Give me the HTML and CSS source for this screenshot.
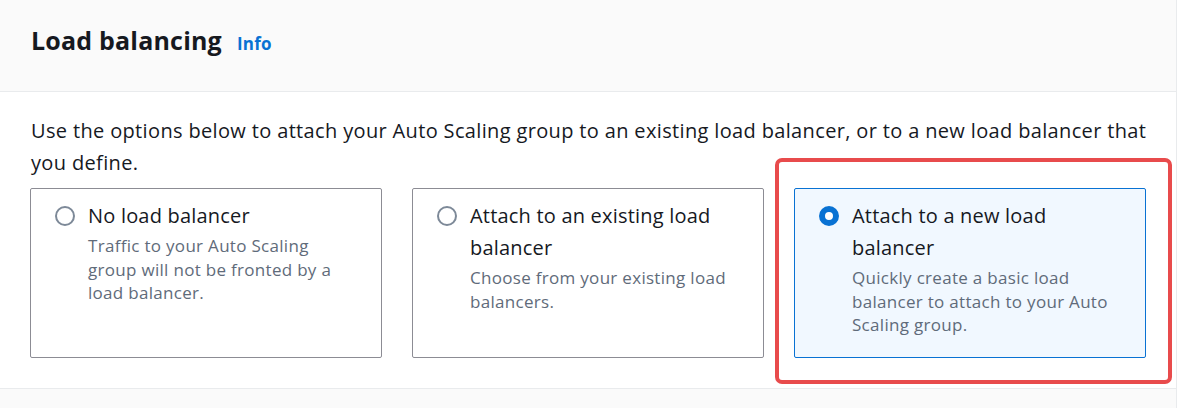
FILE: index.html
```html
<!DOCTYPE html>
<html lang="en">
<head>
<meta charset="utf-8">
<title>Load balancing</title>
<link rel="stylesheet" href="styles.css">
</head>
<body>
<div class="panel">
  <div class="panel-header">
    <h2 class="title">Load balancing</h2>
    <a class="info" href="#">Info</a>
  </div>
  <div class="panel-body">
    <p class="intro">Use the options below to attach your Auto Scaling group to an existing load balancer, or to a new load balancer that you define.</p>
    <div class="tiles">
      <div class="tile">
        <span class="radio"></span>
        <div class="tile-text">
          <div class="tile-title">No load balancer</div>
          <div class="tile-desc">Traffic to your Auto Scaling group will not be fronted by a load balancer.</div>
        </div>
      </div>
      <div class="tile">
        <span class="radio"></span>
        <div class="tile-text">
          <div class="tile-title">Attach to an existing load balancer</div>
          <div class="tile-desc">Choose from your existing load balancers.</div>
        </div>
      </div>
      <div class="tile tile-selected">
        <span class="radio radio-checked"></span>
        <div class="tile-text">
          <div class="tile-title">Attach to a new load balancer</div>
          <div class="tile-desc">Quickly create a basic load balancer to attach to your Auto Scaling group.</div>
        </div>
        <div class="highlight"></div>
      </div>
    </div>
  </div>
  <div class="panel-footer"></div>
</div>
</body>
</html>
```

FILE: styles.css
```css
html, body {
  margin: 0;
  padding: 0;
  background: #ffffff;
}
body {
  font-family: "Open Sans", "Noto Sans", sans-serif;
  color: #16191f;
  width: 1182px;
  height: 408px;
  overflow: hidden;
}
.panel {
  width: 1176px;
  height: 408px;
  border-right: 1px solid #e9ebed;
  display: flex;
  flex-direction: column;
}
.panel-header {
  background: #fafafa;
  height: 91px;
  flex: none;
  border-bottom: 1px solid #e9ebed;
  display: flex;
  align-items: baseline;
  padding: 0 31px;
  box-sizing: content-box;
}
.title {
  margin: 0;
  padding-top: 24px;
  font-size: 25px;
  font-weight: 700;
  line-height: 32px;
  letter-spacing: 0.2px;
}
.info {
  margin-left: 15px;
  font-size: 17px;
  font-weight: 700;
  color: #0972d3;
  text-decoration: none;
  letter-spacing: 0.2px;
}
.panel-body {
  flex: none;
  padding: 23px 20px 30px 31px;
  border-bottom: 1px solid #e9ebed;
}
.intro {
  margin: 0;
  font-size: 20px;
  line-height: 32px;
  letter-spacing: 0.35px;
}
.tiles {
  display: grid;
  grid-template-columns: 352px 352px 352px;
  column-gap: 30px;
  margin-top: 9px;
  margin-left: -1px;
}
.tile {
  position: relative;
  height: 170px;
  box-sizing: border-box;
  border: 1px solid #8c8c94;
  border-radius: 2px;
  padding: 11px 24px 0 24px;
  display: flex;
  align-items: flex-start;
  gap: 13px;
}
.tile-selected {
  background: #f1f8ff;
  border-color: #0972d3;
}
.radio {
  flex: none;
  width: 20px;
  height: 20px;
  margin-top: 6px;
  box-sizing: border-box;
  border: 2px solid #7d8998;
  border-radius: 50%;
  background: #ffffff;
}
.radio-checked {
  border: 6px solid #0972d3;
}
.tile-text {
  flex: 1;
}
.tile-title {
  font-size: 20px;
  line-height: 32px;
  color: #16191f;
  letter-spacing: 0.2px;
}
.tile-desc {
  margin-top: 2px;
  font-size: 17px;
  line-height: 23.5px;
  color: #5f6b7a;
  letter-spacing: 0.3px;
}
.highlight {
  position: absolute;
  left: -20px;
  top: -31px;
  right: -27px;
  bottom: -27px;
  border: 4px solid #e84b4c;
  border-radius: 7px;
  pointer-events: none;
}
.panel-footer {
  flex: 1;
  background: #fafafa;
}
```
